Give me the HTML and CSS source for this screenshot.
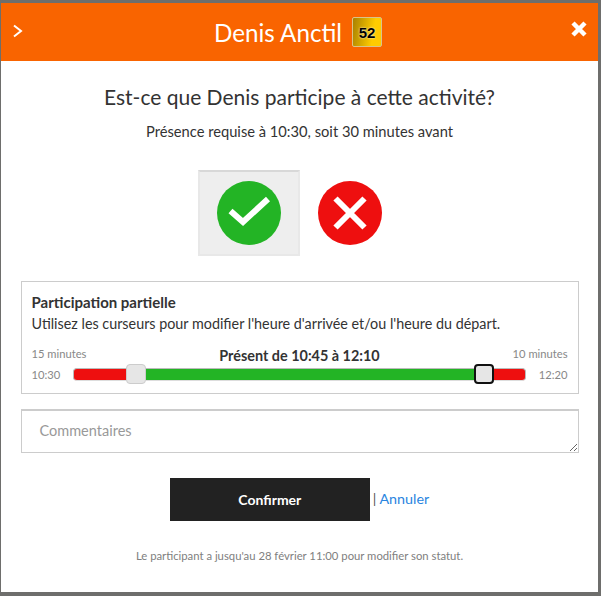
FILE: index.html
```html
<!DOCTYPE html>
<html lang="fr">
    <head>
        <meta charset="UTF-8">
        <meta name="viewport" content="width=device-width, initial-scale=1.0">
        <title>Participation</title>
        <link rel="stylesheet" href="styles.css">
    </head>
    <body>
        <div class="modal">
            <header class="modal-header">
                <svg class="chevron" width="10" height="14" viewBox="0 0 10 14"><path d="M1 1.500 8 7 1 12.500" fill="none" stroke="#fff" stroke-width="2"/></svg>
                <h1 class="modal-title">Denis Anctil</h1>
                <span class="badge">52</span>
                <svg class="close" width="18" height="18" viewBox="0 0 18 18"><path d="M3 3 15 15M15 3 3 15" fill="none" stroke="#fff" stroke-width="4.500"/></svg>
            </header>

            <h2 class="question">Est-ce que Denis participe à cette activité?</h2>
            <p class="subtitle">Présence requise à 10:30, soit 30 minutes avant</p>

            <div class="choices">
                <div class="choice choice-selected">
                    <svg width="64" height="64" viewBox="0 0 64 64"><circle cx="32" cy="32" r="32" fill="#23b425"/><path d="M13.500 30 26 41 51 18" fill="none" stroke="#fff" stroke-width="6"/></svg>
                </div>
                <div class="choice choice-no">
                    <svg width="64" height="64" viewBox="0 0 64 64"><circle cx="32" cy="32" r="32" fill="#ee0f0f"/><path d="M17.500 17.500 46.500 46.500M46.500 17.500 17.500 46.500" fill="none" stroke="#fff" stroke-width="6"/></svg>
                </div>
            </div>

            <section class="partial">
                <h3 class="partial-title">Participation partielle</h3>
                <p class="partial-help">Utilisez les curseurs pour modifier l'heure d'arrivée et/ou l'heure du départ.</p>
                <div class="range-labels">
                    <span class="muted">15 minutes</span>
                    <strong class="range-summary">Présent de 10:45 à 12:10</strong>
                    <span class="muted">10 minutes</span>
                </div>
                <div class="range-row">
                    <span class="muted range-time">10:30</span>
                    <div class="track">
                        <div class="seg seg-red seg-start"></div>
                        <div class="handle"></div>
                        <div class="seg seg-green"></div>
                        <div class="handle handle-focus"></div>
                        <div class="seg seg-red seg-end"></div>
                    </div>
                    <span class="muted range-time">12:20</span>
                </div>
            </section>

            <textarea class="comments" placeholder="Commentaires"></textarea>

            <div class="actions">
                <button class="confirm">Confirmer</button>
                <span class="sep">|</span>
                <a class="cancel" href="#">Annuler</a>
            </div>

            <p class="notice">Le participant a jusqu'au 28 février 11:00 pour modifier son statut.</p>
        </div>
    </body>
</html>
```
FILE: styles.css
```css
html, body {
    height: 100%;
}

body {
    margin: 0;
    padding: 3px 3px 4px 1px;
    box-sizing: border-box;
    background: #6e6e6c;
    font-family: Lato, sans-serif;
    color: #333;
    overflow: hidden;
    display: flex;
    flex-direction: column;
}

.modal {
    background: #fff;
    flex: 1;
    display: flex;
    flex-direction: column;
    align-items: center;
}

.modal-header {
    position: relative;
    align-self: stretch;
    height: 58px;
    padding-right: 3px;
    background: #f96400;
    display: flex;
    align-items: center;
    justify-content: center;
    gap: 10px;
    flex-shrink: 0;
}

.chevron {
    position: absolute;
    left: 12px;
    top: 21px;
}

.close {
    position: absolute;
    left: 569px;
    top: 17px;
}

.modal-title {
    margin: 0;
    font-size: 24.200px;
    font-weight: 400;
    color: #fff;
}

.badge {
    width: 28px;
    height: 28px;
    border: 1px solid #d8c48a;
    border-radius: 2px;
    background: linear-gradient(100deg, #a88000, #ffcc00 70%);
    color: #000;
    font: bold 15px "Liberation Sans", sans-serif;
    display: flex;
    align-items: center;
    justify-content: center;
    text-shadow: 0 0 2px #fff;
}

.question {
    margin: 22px 0 0;
    font-size: 21px;
    line-height: 28px;
    font-weight: 400;
}

.subtitle {
    margin: 10px 0 0;
    font-size: 14.700px;
    line-height: 20px;
}

.choices {
    margin: 29px 1px 0 0;
    display: flex;
}

.choice {
    width: 102px;
    height: 86px;
    box-sizing: border-box;
    display: flex;
    align-items: center;
    justify-content: center;
}

.choice-no {
    width: 100px;
}

.choice-selected {
    background: #eee;
    border: 2px solid #e8e8e8;
    border-top-color: #d8d8d8;
}

.partial {
    margin-top: 25px;
    width: 558px;
    height: 113px;
    box-sizing: border-box;
    border: 1px solid #ccc;
    padding: 11px 10px 0;
    font-size: 14.350px;
    line-height: 20px;
}

.partial-title {
    margin: 0;
    font-size: 15px;
    line-height: 19px;
    font-weight: 700;
}

.partial-help {
    margin: 2px 0 0;
}

.range-labels {
    margin-top: 11px;
    height: 18px;
    display: flex;
    justify-content: space-between;
    align-items: flex-start;
    line-height: 18px;
}

.range-summary {
    margin-top: 2px;
    font-size: 14.400px;
    font-weight: 700;
}

.muted {
    font-size: 11.200px;
    color: #888;
}

.range-time {
    margin-top: 2px;
}

.range-row {
    display: flex;
    align-items: center;
    justify-content: space-between;
    height: 22px;
}

.track {
    width: 453px;
    height: 14px;
    display: flex;
    align-items: center;
}

.seg {
    height: 13px;
    box-sizing: border-box;
    border-top: 1px solid #bbb;
    border-bottom: 1px solid #ddd;
}

.seg-red {
    background: #ee0f0f;
}

.seg-green {
    background: #23b425;
    flex: 1;
}

.seg-start {
    width: 53px;
    border-left: 1px solid #bbb;
    border-radius: 4px 0 0 4px;
}

.seg-end {
    width: 32px;
    border-right: 1px solid #bbb;
    border-radius: 0 4px 4px 0;
}

.handle {
    width: 20px;
    height: 20px;
    flex-shrink: 0;
    box-sizing: border-box;
    border: 1px solid #ccc;
    border-radius: 4px;
    background: #e6e6e6;
}

.handle-focus {
    border: 2px solid #111;
}

.comments {
    margin-top: 15px;
    width: 558px;
    height: 44px;
    box-sizing: border-box;
    border: 1px solid #ccc;
    border-top-width: 2px;
    padding: 10px 18px;
    font: 14.500px/20px Lato, sans-serif;
    flex-shrink: 0;
}

.comments::placeholder {
    color: #999;
}

.actions {
    margin-top: 25px;
    display: flex;
    align-items: center;
    gap: 3px;
    font-size: 14.300px;
}

.confirm {
    width: 200px;
    height: 43px;
    border: 0;
    background: #222;
    color: #fff;
    font: 700 14px Lato, sans-serif;
}

.sep {
    color: #555;
    margin-bottom: 3px;
}

.cancel {
    color: #2a85e0;
    text-decoration: none;
    margin-bottom: 3px;
}

.notice {
    margin: 27px 0 0;
    font-size: 11.300px;
    line-height: 16px;
    color: #808080;
}
```
